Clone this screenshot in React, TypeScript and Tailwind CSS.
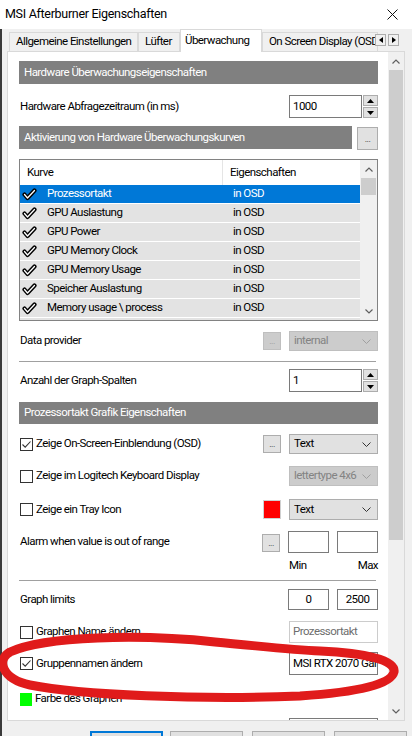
import React from 'react'

const FONT = 'font-["Segoe_UI",Roboto,"Liberation_Sans",sans-serif]'

function Chevron({ color = '#333' }: { color?: string }) {
  return (
    <svg width="9" height="5" viewBox="0 0 9 5" className="shrink-0">
      <path d="M0.5 0.5 L4.5 4.5 L8.5 0.5" fill="none" stroke={color} strokeWidth="1" />
    </svg>
  )
}

function Dropdown({ value, disabled }: { value: string; disabled?: boolean }) {
  return (
    <div
      className={`w-[89px] h-full flex items-center justify-between pl-[4px] pr-[6px] border whitespace-nowrap ${
        disabled ? 'bg-[#cccccc] border-[#bfbfbf] text-[#838383]' : 'bg-[#e1e1e1] border-[#adadad] text-black'
      }`}
    >
      <span>{value}</span>
      <Chevron color={disabled ? '#a0a0a0' : '#333'} />
    </div>
  )
}

function DotsButton({ disabled }: { disabled?: boolean }) {
  return (
    <div
      className={`w-[18px] h-[18px] flex items-end justify-center pb-[3px] text-[9px] leading-none border ${
        disabled ? 'bg-[#cccccc] border-[#bfbfbf] text-[#9a9a9a]' : 'bg-[#e1e1e1] border-[#adadad] text-[#333]'
      }`}
    >
      ...
    </div>
  )
}

function Spin({ value }: { value: string }) {
  return (
    <div className="flex h-full">
      <div className="w-[73px] h-full bg-white border border-[#7a7a7a] pl-[3px] flex items-center">{value}</div>
      <div className="w-[16px] h-full flex flex-col gap-[1px] pl-[1px]">
        <div className="flex-1 bg-[#e1e1e1] border border-[#adadad] flex items-center justify-center">
          <svg width="7" height="4" viewBox="0 0 7 4"><path d="M0 4 L3.5 0 L7 4 Z" fill="#000" /></svg>
        </div>
        <div className="flex-1 bg-[#e1e1e1] border border-[#adadad] flex items-center justify-center">
          <svg width="7" height="4" viewBox="0 0 7 4"><path d="M0 0 L3.5 4 L7 0 Z" fill="#000" /></svg>
        </div>
      </div>
    </div>
  )
}

function Checkbox({ checked }: { checked?: boolean }) {
  return (
    <div className="w-[13px] h-[13px] border border-[#333] bg-white shrink-0 flex items-center justify-center">
      {checked && (
        <svg width="11" height="11" viewBox="0 0 11 11">
          <path d="M1.5 5.5 L4.2 8.2 L9.5 2.5" fill="none" stroke="#333" strokeWidth="1.1" />
        </svg>
      )}
    </div>
  )
}

function SectionBar({ title, className = '' }: { title: string; className?: string }) {
  return (
    <div className={`bg-[#808080] text-white flex items-center pl-[5px] whitespace-nowrap ${className}`}>{title}</div>
  )
}

function CheckIcon() {
  return (
    <svg width="15" height="13" viewBox="0 0 15 13" className="shrink-0">
      <path d="M2.5 6.5 L5.5 10 L12.5 2.5" fill="none" stroke="#000" strokeWidth="4.2" strokeLinecap="round" strokeLinejoin="round" />
      <path d="M2.5 6.5 L5.5 10 L12.5 2.5" fill="none" stroke="#fff" strokeWidth="1.3" strokeLinecap="round" strokeLinejoin="round" />
    </svg>
  )
}

const curves = [
  'Prozessortakt',
  'GPU Auslastung',
  'GPU Power',
  'GPU Memory Clock',
  'GPU Memory Usage',
  'Speicher Auslastung',
  'Memory usage \\ process',
  'CPU Temperatur',
]

function CurveList() {
  return (
    <div className="mt-[8px] h-[162px] border border-[#828282] flex overflow-hidden shrink-0">
      <div className="flex-1 flex flex-col bg-white overflow-hidden">
        <div className="h-[25px] flex items-center shrink-0">
          <div className="w-[203px] pl-[7px] h-full flex items-center border-r border-[#e5e5e5]">Kurve</div>
          <div className="pl-[7px]">Eigenschaften</div>
        </div>
        {curves.map((c, i) => (
          <div
            key={c}
            className={`h-[19px] shrink-0 flex items-center border-b border-white ${
              i === 0 ? 'bg-[#0078d7] text-white' : 'bg-[#e3e3e3] text-black'
            }`}
          >
            <div className="w-[27px] pl-[2px] flex items-center">
              <CheckIcon />
            </div>
            <div className="w-[186px]">{c}</div>
            <div>in OSD</div>
          </div>
        ))}
      </div>
      <div className="w-[17px] bg-[#f0f0f0] flex flex-col items-center">
        <div className="h-[18px] flex items-center justify-center">
          <svg width="8" height="5" viewBox="0 0 8 5"><path d="M0.5 4.5 L4 1 L7.5 4.5" fill="none" stroke="#606060" strokeWidth="1.2" /></svg>
        </div>
        <div className="w-[15px] h-[17px] bg-[#cdcdcd]" />
        <div className="flex-1" />
        <div className="h-[18px] flex items-center justify-center">
          <svg width="8" height="5" viewBox="0 0 8 5"><path d="M0.5 0.5 L4 4 L7.5 0.5" fill="none" stroke="#606060" strokeWidth="1.2" /></svg>
        </div>
      </div>
    </div>
  )
}

function Row({ label, mt, h, children, check, checked }: { label: React.ReactNode; mt: string; h: string; children?: React.ReactNode; check?: boolean; checked?: boolean }) {
  return (
    <div className={`${mt} ${h} flex items-center justify-between shrink-0`}>
      <div className="flex items-center gap-[3px] pl-[1px] whitespace-nowrap">
        {check && <Checkbox checked={checked} />}
        <span>{label}</span>
      </div>
      <div className="flex items-center gap-[8px] h-full">{children}</div>
    </div>
  )
}

function Tab({ label, active, w }: { label: string; active?: boolean; w: string }) {
  return (
    <div
      className={`${w} shrink-0 overflow-hidden whitespace-nowrap flex items-center ${
        active
          ? 'h-[23px] bg-white border border-b-0 border-[#d9d9d9] pl-[4px] relative z-10 -mb-[1px]'
          : 'h-[19px] bg-[#f0f0f0] border border-[#d9d9d9] border-b-0 pl-[6px]'
      }`}
    >
      {label}
    </div>
  )
}

export default function App() {
  return (
    <div className={`w-[412px] h-[736px] overflow-hidden bg-[#f0f0f0] relative text-[11.5px] tracking-[-0.55px] leading-none text-black ${FONT}`}>
      {/* Title bar */}
      <div className="h-[29px] bg-white flex items-center justify-between pl-[5px] pr-[14px]">
        <span className="text-[12.5px] tracking-[-0.3px]">MSI Afterburner Eigenschaften</span>
        <svg width="11" height="11" viewBox="0 0 11 11">
          <path d="M0.5 0.5 L10.5 10.5 M10.5 0.5 L0.5 10.5" stroke="#111" strokeWidth="1" />
        </svg>
      </div>

      <div className="border-l-2 border-[#3a3a3a] h-[707px] flex flex-col">
        {/* Tabs */}
        <div className="h-[24px] flex items-end pl-[7px] relative">
          <Tab label="Allgemeine Einstellungen" w="w-[129px]" />
          <Tab label="Lüfter" w="w-[42px]" />
          <Tab label="Überwachung" active w="w-[82px]" />
          <Tab label="On Screen Display (OSD)" w="w-[116px]" />
          <div className="absolute right-[13px] top-[5px] flex gap-[2px]">
            <div className="w-[11px] h-[12px] border border-[#adadad] bg-[#f0f0f0] flex items-center justify-center">
              <svg width="4" height="6" viewBox="0 0 4 6"><path d="M4 0 L0 3 L4 6 Z" fill="#000" /></svg>
            </div>
            <div className="w-[11px] h-[12px] border border-[#adadad] bg-[#f0f0f0] flex items-center justify-center">
              <svg width="4" height="6" viewBox="0 0 4 6"><path d="M0 0 L4 3 L0 6 Z" fill="#000" /></svg>
            </div>
          </div>
        </div>

        {/* Panel */}
        <div className="ml-[5px] w-[398px] h-[670px] border border-[#d9d9d9] bg-white flex">
          <div className="w-[380px] h-full overflow-hidden flex flex-col pl-[11px] pr-[10px]">
            <SectionBar title="Hardware Überwachungseigenschaften" className="mt-[9px] h-[23px] shrink-0" />
            <Row label="Hardware Abfragezeitraum (in ms)" mt="mt-[11px]" h="h-[23px]">
              <Spin value="1000" />
            </Row>
            <div className="mt-[8px] h-[25px] flex items-start justify-between shrink-0">
              <SectionBar title="Aktivierung von Hardware Überwachungskurven" className="h-[23px] w-[333px]" />
              <div className="mt-[1px] w-[21px] h-[23px] bg-[#e1e1e1] border border-[#adadad] flex items-end justify-center pb-[5px] text-[9px] text-[#333]">...</div>
            </div>
            <CurveList />
            <Row label="Data provider" mt="mt-[10px]" h="h-[20px]">
              <DotsButton disabled />
              <Dropdown value="internal" disabled />
            </Row>
            <div className="mt-[10px] h-[1px] bg-[#a0a0a0] mr-[2px] shrink-0" />
            <Row label="Anzahl der Graph-Spalten" mt="mt-[7px]" h="h-[23px]">
              <Spin value="1" />
            </Row>
            <SectionBar title="Prozessortakt Grafik Eigenschaften" className="mt-[10px] h-[22px] shrink-0" />
            <Row label="Zeige On-Screen-Einblendung (OSD)" mt="mt-[10px]" h="h-[20px]" check checked>
              <DotsButton />
              <Dropdown value="Text" />
            </Row>
            <Row label="Zeige im Logitech Keyboard Display" mt="mt-[12px]" h="h-[20px]" check>
              <Dropdown value="lettertype 4x6" disabled />
            </Row>
            <Row label="Zeige ein Tray Icon" mt="mt-[13px]" h="h-[21px]" check>
              <div className="w-[18px] h-[19px] bg-[#ff0000] border border-[#d0d0d0]" />
              <Dropdown value="Text" />
            </Row>
            <Row label="Alarm when value is out of range" mt="mt-[11px]" h="h-[22px]">
              <div className="self-end mb-[1px]"><DotsButton /></div>
              <div className="flex gap-[8px] h-full">
                <div className="w-[41px] h-full bg-white border border-[#7a7a7a]" />
                <div className="w-[41px] h-full bg-white border border-[#7a7a7a]" />
              </div>
            </Row>
            <div className="mt-[5px] h-[15px] flex justify-end shrink-0">
              <div className="w-[89px] flex justify-between items-center">
                <span>Min</span>
                <span>Max</span>
              </div>
            </div>
            <div className="mt-[7px] h-[1px] bg-[#a0a0a0] mr-[2px] shrink-0" />
            <Row label="Graph limits" mt="mt-[8px]" h="h-[21px]">
              <div className="flex gap-[8px] h-full">
                <div className="w-[41px] h-full bg-white border border-[#7a7a7a] flex items-center justify-center">0</div>
                <div className="w-[41px] h-full bg-white border border-[#7a7a7a] flex items-center justify-center">2500</div>
              </div>
            </Row>
            <Row label="Graphen Name ändern" mt="mt-[11px]" h="h-[22px]" check>
              <div className="w-[89px] h-full bg-white border border-[#cccccc] text-[#6d6d6d] pl-[3px] flex items-center">Prozessortakt</div>
            </Row>
            <Row label="Gruppennamen ändern" mt="mt-[9px]" h="h-[23px]" check checked>
              <div className="w-[89px] h-full bg-white border border-[#7a7a7a] pl-[3px] flex items-center overflow-hidden whitespace-nowrap">MSI RTX 2070 Gaming</div>
            </Row>
            <Row
              label={
                <span className="flex items-center gap-[3px]">
                  <span className="w-[12px] h-[13px] bg-[#00ff00] inline-block" />
                  Farbe des Graphen
                </span>
              }
              mt="mt-[17px]"
              h="h-[14px]"
            />
            <div className="mt-[12px] h-[22px] flex justify-end shrink-0">
              <div className="w-[89px] h-full bg-white border border-[#7a7a7a]" />
            </div>
          </div>
          {/* Scrollbar */}
          <div className="w-[16px] h-full bg-[#f0f0f0] flex flex-col items-center">
            <div className="h-[18px] flex items-center justify-center">
              <svg width="8" height="5" viewBox="0 0 8 5"><path d="M0.5 4.5 L4 1 L7.5 4.5" fill="none" stroke="#606060" strokeWidth="1.2" /></svg>
            </div>
            <div className="w-[14px] h-[470px] bg-[#cdcdcd]" />
            <div className="flex-1" />
            <div className="h-[18px] flex items-center justify-center">
              <svg width="8" height="5" viewBox="0 0 8 5"><path d="M0.5 0.5 L4 4 L7.5 0.5" fill="none" stroke="#606060" strokeWidth="1.2" /></svg>
            </div>
          </div>
        </div>

        {/* Bottom buttons */}
        <div className="mt-[10px] flex gap-[7px] pl-[88px]">
          <div className="w-[73px] h-[23px] bg-[#e1e1e1] border-2 border-[#0078d7]" />
          <div className="w-[73px] h-[23px] bg-[#e1e1e1] border border-[#adadad]" />
          <div className="w-[73px] h-[23px] bg-[#e1e1e1] border border-[#adadad] ml-[2px]" />
          <div className="w-[73px] h-[23px] bg-[#e1e1e1] border border-[#adadad] ml-[2px]" />
        </div>
      </div>

      {/* Red annotation stroke */}
      <svg className="absolute left-0 top-0 pointer-events-none" width="412" height="736" viewBox="0 0 412 736">
        <path
          d="M10 652 C 45 636, 140 634, 215 642 C 260 646, 290 650, 320 651 C 365 653, 396 660, 394 672 C 391 684, 360 692, 300 696 C 200 700, 80 695, 30 685 C 2 679, -4 660, 10 652 Z"
          fill="none"
          stroke="#e01b1b"
          strokeWidth="9"
          strokeLinejoin="round"
        />
      </svg>
    </div>
  )
}
